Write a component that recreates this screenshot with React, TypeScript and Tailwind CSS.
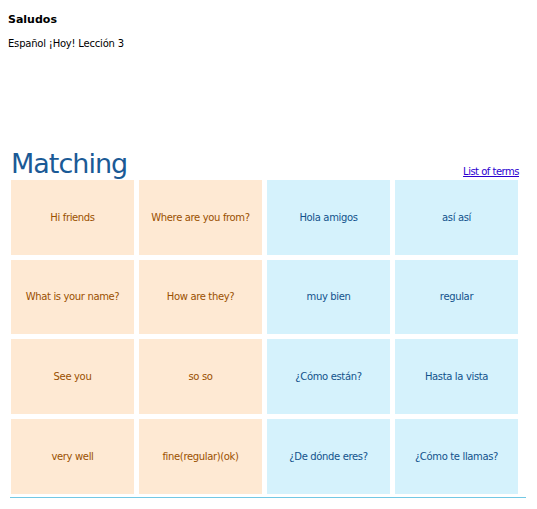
import React from "react";

const cards: { text: string; kind: "term" | "def" }[] = [
  { text: "Hi friends", kind: "term" },
  { text: "Where are you from?", kind: "term" },
  { text: "Hola amigos", kind: "def" },
  { text: "así así", kind: "def" },
  { text: "What is your name?", kind: "term" },
  { text: "How are they?", kind: "term" },
  { text: "muy bien", kind: "def" },
  { text: "regular", kind: "def" },
  { text: "See you", kind: "term" },
  { text: "so so", kind: "term" },
  { text: "¿Cómo están?", kind: "def" },
  { text: "Hasta la vista", kind: "def" },
  { text: "very well", kind: "term" },
  { text: "fine(regular)(ok)", kind: "term" },
  { text: "¿De dónde eres?", kind: "def" },
  { text: "¿Cómo te llamas?", kind: "def" },
];

export default function App() {
  return (
    <div className="w-[537px] h-[509px] bg-white font-['DejaVu_Sans',sans-serif] text-black">
      {/* header */}
      <div className="px-2 pt-[13px]">
        <h1 className="text-[11px] font-bold leading-[13px]">Saludos</h1>
        <p className="mt-[12px] text-[10px] leading-[12px] tracking-[-0.2px]">Español ¡Hoy! Lección 3</p>
      </div>

      {/* matching game */}
      <div className="ml-[10px] mt-[96px] w-[516px]">
        <div className="flex items-end justify-between pl-px pr-[7px]">
          <h2 className="pt-[2px] text-[27px] leading-[32px] tracking-[-1px] text-[#1a5a96]">Matching</h2>
          <a href="#" className="mb-[2px] text-[10px] leading-[12px] tracking-[-0.5px] text-[#2a00d0] underline">
            List of terms
          </a>
        </div>

        <div className="ml-px grid w-[507px] grid-cols-4 gap-x-[5px] gap-y-[5px]">
          {cards.map((c) => (
            <div
              key={c.text}
              className={
                c.kind === "term"
                  ? "flex h-[74.67px] items-center justify-center bg-[#fee9d3] text-[10px] tracking-[-0.35px] text-[#9a5000]"
                  : "flex h-[74.67px] items-center justify-center bg-[#d5f2fc] text-[10px] tracking-[-0.35px] text-[#12528c]"
              }
            >
              {c.text}
            </div>
          ))}
        </div>

        <hr className="mt-[3.33px] border-t border-[#72c8e4]" />
      </div>
    </div>
  );
}
